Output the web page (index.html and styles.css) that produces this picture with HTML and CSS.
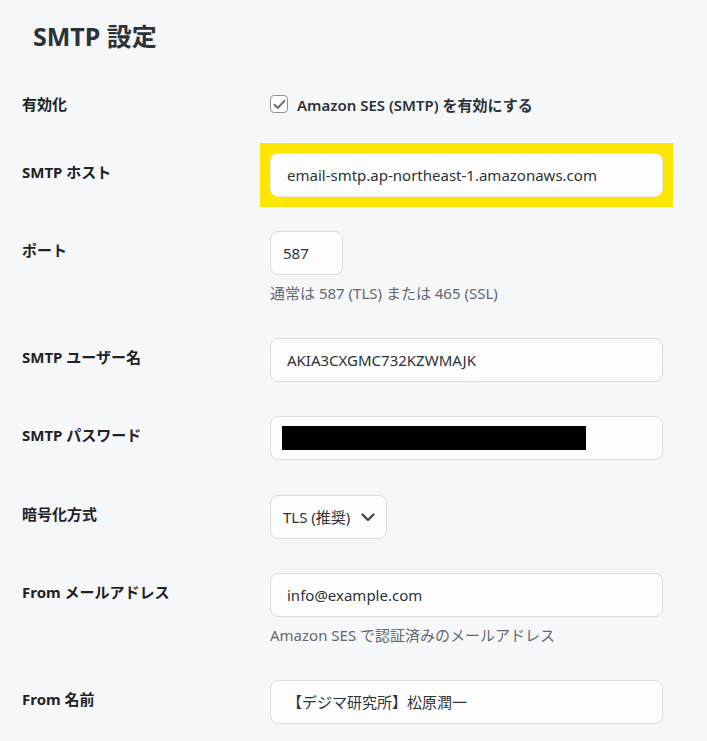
FILE: index.html
```html
<!DOCTYPE html>
<html lang="ja">
<head>
    <meta charset="UTF-8">
    <meta name="viewport" content="width=device-width, initial-scale=1.0">
    <title>SMTP 設定</title>
    <link rel="stylesheet" href="styles.css">
</head>
<body>
    <div class="wrap">
        <h1 class="page-title">SMTP 設定</h1>

        <table class="form-table">
            <tr>
                <th>有効化</th>
                <td class="check-row">
                    <label class="check">
                        <span class="check-box">
                            <svg width="13" height="11" viewBox="0 0 13 11"><path d="M1.5 5.8 L4.8 9 L11.5 1.8" fill="none" stroke="#6b7075" stroke-width="2" stroke-linecap="round" stroke-linejoin="round"/></svg>
                        </span>
                        Amazon SES (SMTP) を有効にする
                    </label>
                </td>
            </tr>
            <tr>
                <th>SMTP ホスト</th>
                <td>
                    <span class="highlight">
                        <input type="text" class="field field-host" value="email-smtp.ap-northeast-1.amazonaws.com">
                    </span>
                </td>
            </tr>
            <tr>
                <th>ポート</th>
                <td>
                    <input type="text" class="field field-small" value="587">
                    <p class="description">通常は 587 (TLS) または 465 (SSL)</p>
                </td>
            </tr>
            <tr>
                <th>SMTP ユーザー名</th>
                <td><input type="text" class="field" value="AKIA3CXGMC732KZWMAJK"></td>
            </tr>
            <tr>
                <th>SMTP パスワード</th>
                <td>
                    <div class="field field-secret"><span class="redacted"></span></div>
                </td>
            </tr>
            <tr>
                <th>暗号化方式</th>
                <td>
                    <span class="select-wrap">
                        <select class="field field-select">
                            <option>TLS (推奨)</option>
                            <option>SSL</option>
                        </select>
                        <svg class="chevron" width="14" height="9" viewBox="0 0 14 9"><path d="M1.5 1.5 L7 7 L12.5 1.5" fill="none" stroke="#3c434a" stroke-width="2.2" stroke-linecap="round" stroke-linejoin="round"/></svg>
                    </span>
                </td>
            </tr>
            <tr>
                <th>From メールアドレス</th>
                <td>
                    <input type="text" class="field" value="info@example.com">
                    <p class="description">Amazon SES で認証済みのメールアドレス</p>
                </td>
            </tr>
            <tr>
                <th>From 名前</th>
                <td><input type="text" class="field" value="【デジマ研究所】松原潤一"></td>
            </tr>
        </table>
    </div>
</body>
</html>
```

FILE: styles.css
```css
body {
    margin: 0;
    background: #f6f7f9;
    color: #1d2327;
    font-family: "Noto Sans", "Noto Sans CJK JP", sans-serif;
    font-size: 15px;
}
.wrap {
    padding: 20px 22px 0;
}
.page-title {
    margin: 0 0 21px 11px;
    font-size: 25px;
    line-height: 32px;
    font-weight: 700;
    color: #2c3338;
}
.form-table {
    border-collapse: collapse;
}
.form-table th {
    width: 248px;
    padding: 26px 0 0;
    text-align: left;
    vertical-align: top;
    font-size: 15px;
    line-height: 20px;
    font-weight: 700;
}
.form-table td {
    padding: 17px 0 17.5px;
    vertical-align: top;
}
.form-table tr:first-child th {
    padding-top: 21px;
}
.check {
    display: flex;
    align-items: center;
    gap: 9px;
    height: 28px;
    font-weight: 600;
    color: #2c3338;
}
.check-box {
    display: flex;
    align-items: center;
    justify-content: center;
    width: 16px;
    height: 16px;
    border: 1px solid #8c8f94;
    border-radius: 4px;
    background: #fff;
}
.field {
    display: block;
    box-sizing: border-box;
    width: 393px;
    height: 44px;
    margin: 0;
    padding: 0 16px;
    border: 1px solid #dcdcde;
    border-radius: 8px;
    background: #fdfdfd;
    color: #2c3338;
    font: inherit;
    font-size: 15px;
}
.highlight {
    display: inline-block;
    margin: -10px;
    padding: 10px;
    background: #ffe600;
}
.field-host {
    border-color: #e6e6e6;
}
.field-small {
    width: 73px;
    padding: 0 12px;
}
.field-secret {
    display: flex;
    align-items: center;
    padding: 0 11px;
}
.redacted {
    width: 304px;
    height: 24px;
    background: #000;
}
.select-wrap {
    position: relative;
    display: inline-block;
    vertical-align: top;
}
.field-select {
    width: 117px;
    padding: 0 30px 0 12px;
    appearance: none;
    -webkit-appearance: none;
}
.chevron {
    position: absolute;
    top: 18px;
    right: 12px;
    pointer-events: none;
}
.description {
    margin: 8px 0 0;
    font-size: 15px;
    line-height: 20px;
    color: #646970;
}
```
